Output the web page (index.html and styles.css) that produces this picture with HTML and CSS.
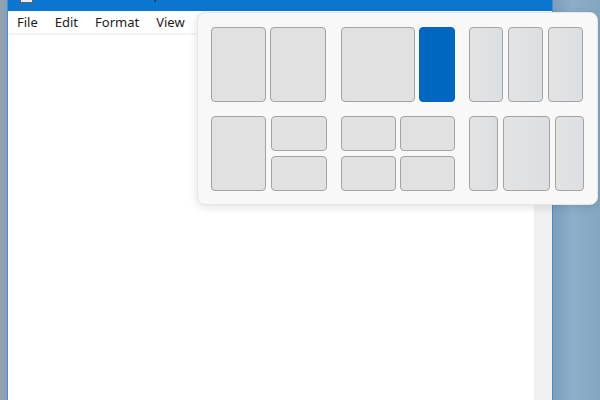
FILE: index.html
```html
<!DOCTYPE html>
<html>
<head>
<meta charset="utf-8">
<link rel="stylesheet" href="styles.css">
</head>
<body>
<div class="desk-left"></div>
<div class="window">
  <div class="titlebar">
    <span class="app-icon"></span>
    <span class="title">Untitled - Notepad</span>
  </div>
  <div class="menubar">
    <span>File</span><span>Edit</span><span>Format</span><span>View</span>
  </div>
  <div class="content">
    <div class="editor"></div>
    <div class="scrollbar"></div>
  </div>
</div>
<div class="desk-right"></div>

<div class="flyout">
  <div class="layout row">
    <div class="cell w55"></div><div class="cell w57"></div>
  </div>
  <div class="layout row">
    <div class="cell w74"></div><div class="cell active w36"></div>
  </div>
  <div class="layout row g5">
    <div class="cell w34 tint"></div><div class="cell w35 tint"></div><div class="cell w35 tint"></div>
  </div>

  <div class="layout row g5">
    <div class="cell w55"></div>
    <div class="stack w56"><div class="cell"></div><div class="cell"></div></div>
  </div>
  <div class="layout row">
    <div class="stack w55"><div class="cell"></div><div class="cell"></div></div>
    <div class="stack w55"><div class="cell"></div><div class="cell"></div></div>
  </div>
  <div class="layout row g5">
    <div class="cell w29 tint"></div><div class="cell w47 tint"></div><div class="cell w29 tint"></div>
  </div>
</div>
</body>
</html>
```

FILE: styles.css
```css
html, body {
  margin: 0;
  padding: 0;
  width: 600px;
  height: 400px;
  overflow: hidden;
}
body {
  display: flex;
  position: relative;
  font-family: "Noto Sans", "Open Sans", sans-serif;
  background: #8aa6bd;
}
.desk-left {
  width: 7px;
  background: linear-gradient(90deg, #93a3b1, #8b9fb0);
}
.window {
  width: 544px;
  display: flex;
  flex-direction: column;
  border-left: 1px solid #3d8fdc;
  border-right: 1px solid #3d8fdc;
  background: #fff;
}
.titlebar {
  height: 11px;
  background: #0a76d0;
  display: flex;
  align-items: flex-start;
  overflow: hidden;
  flex: none;
}
.app-icon {
  margin-left: 12px;
  width: 11px;
  height: 2px;
  background: #ececec;
  border: 1px solid #6e6256;
  border-top: none;
}
.title {
  margin-left: 38px;
  margin-top: -12px;
  font-size: 12px;
  line-height: 14px;
  color: #222;
}
.menubar {
  height: 22px;
  flex: none;
  display: flex;
  align-items: center;
  gap: 17px;
  padding-left: 9px;
  font-size: 13px;
  color: #1b1b1b;
  border-bottom: 2px solid #f3f3f3;
}
.content {
  flex: 1;
  display: flex;
}
.editor {
  flex: 1;
  background: #fff;
}
.scrollbar {
  width: 18px;
  background: #f0f0f0;
}
.desk-right {
  flex: 1;
  background: linear-gradient(90deg, #7f9db6, #8bafca 40%, #85a6c0);
}

.flyout {
  position: absolute;
  left: 197px;
  top: 12px;
  width: 373px;
  height: 164px;
  padding: 14px 13px 13px 13px;
  background: #f8f8f8;
  border: 1px solid #e6e6e6;
  border-radius: 8px;
  box-shadow: 0 2px 10px rgba(0, 0, 0, 0.12);
  display: grid;
  grid-template-columns: 116px 114px 115px;
  grid-template-rows: 75px 75px;
  column-gap: 14px;
  row-gap: 14px;
}
.layout {
  display: flex;
  gap: 4px;
}
.layout.g5 { gap: 5px; }
.stack {
  display: flex;
  flex-direction: column;
  gap: 5px;
}
.stack .cell { flex: 1; }
.cell {
  box-sizing: border-box;
  background: #e1e1e1;
  border: 1px solid #a3a3a3;
  border-radius: 4px;
}
.cell.tint {
  background: linear-gradient(90deg, #e3e3e3, #dcdfe2);
}
.cell.active {
  background: #0067c0;
  border-color: #0067c0;
}
.w29 { width: 29px; }
.w34 { width: 34px; }
.w35 { width: 35px; }
.w36 { width: 36px; }
.w47 { width: 47px; }
.w55 { width: 55px; }
.w56 { width: 56px; }
.w57 { width: 56px; }
.w74 { width: 74px; }
```
